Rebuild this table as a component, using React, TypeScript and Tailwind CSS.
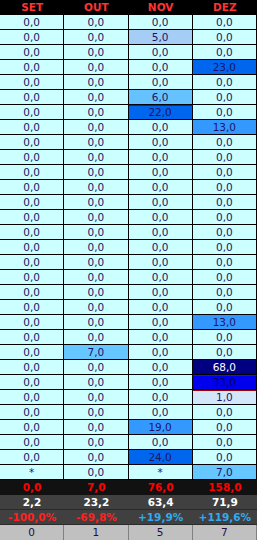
const headers = ["SET", "OUT", "NOV", "DEZ"]

type Cell = { v: string; bg?: string; fg?: string; line?: boolean }

// data rows, keyed by row index -> column -> cell override
const special: Record<number, Record<number, Cell>> = {
	1: { 2: { v: "5,0", bg: "bg-[#a6cdf5]" } },
	3: { 3: { v: "23,0", bg: "bg-[#0066ee]" } },
	5: { 2: { v: "6,0", bg: "bg-[#66c2ff]" } },
	6: { 2: { v: "22,0", bg: "bg-[#0066ee]", line: true } },
	7: { 3: { v: "13,0", bg: "bg-[#3399ff]" } },
	20: { 3: { v: "13,0", bg: "bg-[#3399ff]" } },
	22: { 1: { v: "7,0", bg: "bg-[#66c6ff]" } },
	23: { 3: { v: "68,0", bg: "bg-[#000080]", fg: "text-white" } },
	24: { 3: { v: "33,0", bg: "bg-[#0000ee]", fg: "text-[#000060]", line: true } },
	25: { 3: { v: "1,0", bg: "bg-[#d2e8fa]", line: true } },
	27: { 2: { v: "19,0", bg: "bg-[#3399ff]" } },
	29: { 2: { v: "24,0", bg: "bg-[#0066ee]" } },
	30: {
		0: { v: "*" },
		2: { v: "*" },
		3: { v: "7,0", bg: "bg-[#66c6ff]" },
	},
}

const rows: Cell[][] = Array.from({ length: 31 }, (_, r) =>
	[0, 1, 2, 3].map((c) => special[r]?.[c] ?? { v: "0,0" })
)

const totals = ["0,0", "7,0", "76,0", "158,0"]
const avgs = ["2,2", "23,2", "63,4", "71,9"]
const pcts = ["-100,0%", "-69,8%", "+19,9%", "+119,6%"]
const counts = ["0", "1", "5", "7"]

export default function App() {
	return (
		<div
			className="w-[257px] h-[540px] bg-black overflow-hidden text-[10.5px] leading-none"
			style={{ fontFamily: '"DejaVu Sans", Verdana, sans-serif' }}
		>
			<div className="grid grid-cols-4 h-[15px] bg-black">
				{headers.map((h) => (
					<div key={h} className="flex items-center justify-center font-bold text-[#ff3333]">
						{h}
					</div>
				))}
			</div>
			{rows.map((row, r) => (
				<div key={r} className="grid grid-cols-4 h-[15px]">
					{row.map((cell, c) => (
						<div
							key={c}
							className={`flex items-center justify-center border-r border-b border-black ${
								cell.bg ?? "bg-[#ccffff]"
							} ${cell.fg ?? "text-[#1e1464]"} ${cell.line ? "border-t border-t-[#990000]" : ""}`}
						>
							{cell.v}
						</div>
					))}
				</div>
			))}
			<div className="grid grid-cols-4 h-[15px] bg-[#111111]">
				{totals.map((t, i) => (
					<div key={i} className="flex items-center justify-center font-bold text-[#ff0000]">
						{t}
					</div>
				))}
			</div>
			<div className="grid grid-cols-4 h-[15px] bg-[#404040] border-b border-[#2a2a2a]">
				{avgs.map((t, i) => (
					<div key={i} className="flex items-center justify-center font-bold text-white">
						{t}
					</div>
				))}
			</div>
			<div className="grid grid-cols-4 h-[15px] bg-[#404040] border-b border-[#2a2a2a]">
				{pcts.map((t, i) => (
					<div
						key={i}
						className={`flex items-center justify-center font-bold ${
							t.startsWith("-") ? "text-[#ff2020]" : "text-[#33aaee]"
						}`}
					>
						{t}
					</div>
				))}
			</div>
			<div className="grid grid-cols-4 h-[15px] bg-[#c0c0c0]">
				{counts.map((t, i) => (
					<div key={i} className="flex items-center justify-center border-r border-[#808080] text-[#201040]">
						{t}
					</div>
				))}
			</div>
		</div>
	)
}
